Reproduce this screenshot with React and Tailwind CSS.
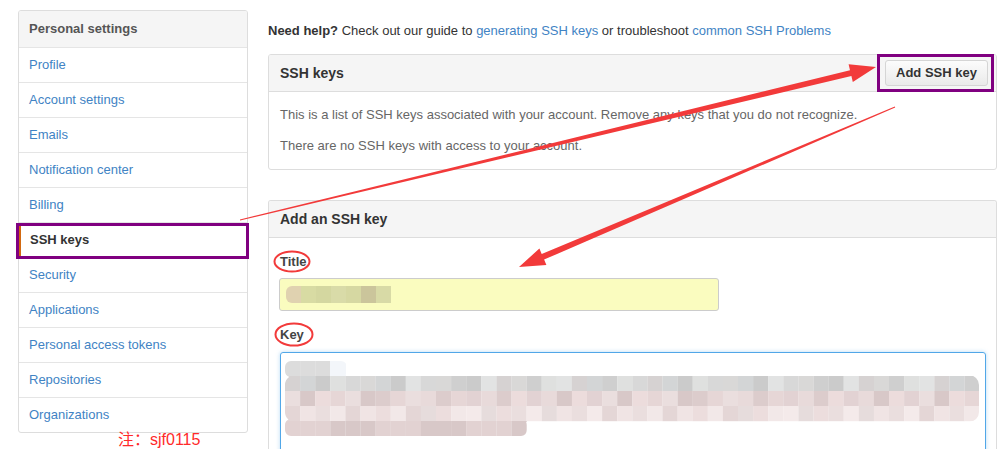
// ── Data ──────────────────────────────────────────────────────────────────────
const NAV = [
  'Profile', 'Account settings', 'Emails', 'Notification center', 'Billing',
  'SSH keys', 'Security', 'Applications', 'Personal access tokens', 'Repositories', 'Organizations',
]

const TITLE_BLOCKS = ['#e0d2b0', '#d8dba3', '#d4d7a0', '#d9dba8', '#d6d8a2', '#cbc59b', '#d8daa6']

const ROWS = [
  { y: 8,  n: 3,  pal: ['#dcdcdc', '#dad6d6', '#d9c9cc'] },
  { y: 23, n: 46, pal: ['#d8d8d8', '#d3d5d6', '#dfe0df', '#d6d2d2', '#cfcfcf', '#e2e3e3', '#d9d8d7', '#cbcbcb'] },
  { y: 38, n: 46, pal: ['#e6d6d6', '#dccccc', '#e8dada', '#e2d2d3', '#ecdcdc', '#d8c8c8', '#eadede'] },
  { y: 53, n: 46, pal: ['#eadede', '#f0e4e4', '#e4d6d6', '#f2e8e8', '#ecdddd', '#e6dcdc', '#f4eaea'] },
  { y: 68, n: 16, pal: ['#e2d2d2', '#dccccc', '#e6d8d8', '#d8c8c8', '#eeeeee', '#e8e2e2'] },
]

// ── Sub-components ────────────────────────────────────────────────────────────
function Sidebar() {
  return (
    <nav className="border border-[#ddd] rounded-[3px]">
      <div className="box-content h-[36px] flex items-center pl-[10px] bg-[#f5f5f5] rounded-t-[2px] border-b border-[#e5e5e5] font-bold text-[#555]">
        Personal settings
      </div>
      {NAV.map((label, i) => {
        const active = label === 'SSH keys'
        return (
          <div
            key={label}
            className={`relative h-[34px] flex items-center pl-[10px] ${i < NAV.length - 1 ? 'box-content border-b border-[#e5e5e5]' : ''}`}
          >
            {active ? (
              <>
                <span className="absolute left-0 top-0 bottom-0 w-[2px] bg-[#d26911]" />
                <span className="pl-[1px] font-bold text-[#333]">{label}</span>
                <span className="absolute top-0 -bottom-[2px] -left-[3px] -right-[2px] border-[3px] border-[#800080]" />
              </>
            ) : (
              <span className="text-[#4183c4]">{label}</span>
            )}
          </div>
        )
      })}
    </nav>
  )
}

function TextareaMosaic() {
  return (
    <svg width="706" height="100" className="block">
      <defs>
        <clipPath id="rows">
          <rect x="4" y="8" width="62" height="16" rx="6" />
          <rect x="4" y="22" width="694" height="47" rx="10" />
          <rect x="4" y="66" width="242" height="17" rx="6" />
        </clipPath>
      </defs>
      <g clipPath="url(#rows)">
        {ROWS.map((r, ri) =>
          Array.from({ length: r.n }).map((_, i) => (
            <rect
              key={`${ri}-${i}`}
              x={4 + i * 15.1}
              y={r.y}
              width="15.2"
              height="15.2"
              fill={r.pal[(i * 5 + ri * 3 + (i % 3)) % r.pal.length]}
            />
          ))
        )}
        <rect x="49" y="8" width="16" height="15" fill="#f3f6fa" />
      </g>
    </svg>
  )
}

function Annotations() {
  return (
    <svg className="absolute inset-0 pointer-events-none" width="998" height="449">
      {/* arrow to "Add SSH key" */}
      <polygon
        fill="#f23a3a"
        points="239.9,219.5 850.0,70.2 848.6,64.3 876,67 852.8,81.9 851.4,76.0 240.1,220.5"
      />
      {/* arrow to the Title field */}
      <polygon
        fill="#f23a3a"
        points="894.8,106.5 541.7,254.0 539.4,248.5 519,267 546.4,265.1 544.1,259.6 895.2,107.5"
      />
      <ellipse cx="292" cy="261.5" rx="17.5" ry="10" fill="none" stroke="#f23a3a" strokeWidth="2" />
      <ellipse cx="294" cy="334.5" rx="18.5" ry="11" fill="none" stroke="#f23a3a" strokeWidth="2" />
    </svg>
  )
}

// ── Page ──────────────────────────────────────────────────────────────────────
export default function App() {
  return (
    <div className="relative w-[998px] h-[449px] overflow-hidden bg-white font-['Liberation_Sans',Arial,sans-serif] text-[13px] leading-[20px] text-[#333]">
      <div className="flex pl-[18px] pt-[10px] gap-[20px]">

        {/* Left menu */}
        <div className="w-[230px] shrink-0">
          <Sidebar />
          <p className="pl-[100px] text-[16px] leading-[16px] mt-[-1px] text-[#ff2a2a] font-['Liberation_Sans','Noto_Sans_CJK_SC',sans-serif]">
            注：sjf0115
          </p>
        </div>

        {/* Content */}
        <main className="w-[729px] shrink-0 pt-[11px]">
          <p>
            <b>Need help?</b> Check out our guide to{' '}
            <span className="text-[#4183c4]">generating SSH keys</span> or troubleshoot{' '}
            <span className="text-[#4183c4]">common SSH Problems</span>
          </p>

          {/* SSH keys */}
          <section className="mt-[13px] border border-[#ddd] rounded-[3px]">
            <div className="box-content h-[36px] flex items-center justify-between pl-[11px] pr-[8px] bg-[#f5f5f5] rounded-t-[2px] border-b border-[#ddd]">
              <span className="text-[14px] font-bold">SSH keys</span>
              <div className="relative">
                <button className="w-[103px] h-[26px] rounded-[3px] border border-[#d5d5d5] bg-gradient-to-b from-[#fcfcfc] to-[#eaeaea] font-bold text-[#333]">
                  Add SSH key
                </button>
                <span className="absolute -top-[6px] -bottom-[6px] -left-[8px] -right-[6px] border-[3px] border-[#800080]" />
              </div>
            </div>
            <div className="pl-[11px] pt-[13px] pb-[13px] text-[#666] flex flex-col gap-[11px]">
              <p>This is a list of SSH keys associated with your account. Remove any keys that you do not recognize.</p>
              <p>There are no SSH keys with access to your account.</p>
            </div>
          </section>

          {/* Add an SSH key */}
          <section className="mt-[30px] border border-[#ddd] border-b-0 rounded-t-[3px]">
            <div className="box-content h-[36px] flex items-center pl-[11px] bg-[#f5f5f5] rounded-t-[2px] border-b border-[#ddd]">
              <span className="text-[14px] font-bold">Add an SSH key</span>
            </div>
            <div className="pl-[11px] pr-[10px] pt-[14px]">
              <label className="block font-bold text-[#444]">Title</label>
              <div className="mt-[6px] -ml-[1px] w-[440px] h-[33px] border border-[#ccc] rounded-[3px] bg-[#fafcbf] flex items-center pl-[6px]">
                <div className="flex rounded-l-[6px] overflow-hidden">
                  {TITLE_BLOCKS.map((c, i) => (
                    <span key={i} className="w-[15px] h-[17px]" style={{ background: c }} />
                  ))}
                </div>
              </div>
              <label className="block mt-[14px] font-bold text-[#444]">Key</label>
              <div className="mt-[7px] h-[140px] border border-[#51a7e8] rounded-[3px] shadow-[0_0_4px_rgba(81,167,232,0.4)]">
                <TextareaMosaic />
              </div>
            </div>
          </section>
        </main>
      </div>

      <Annotations />
    </div>
  )
}
